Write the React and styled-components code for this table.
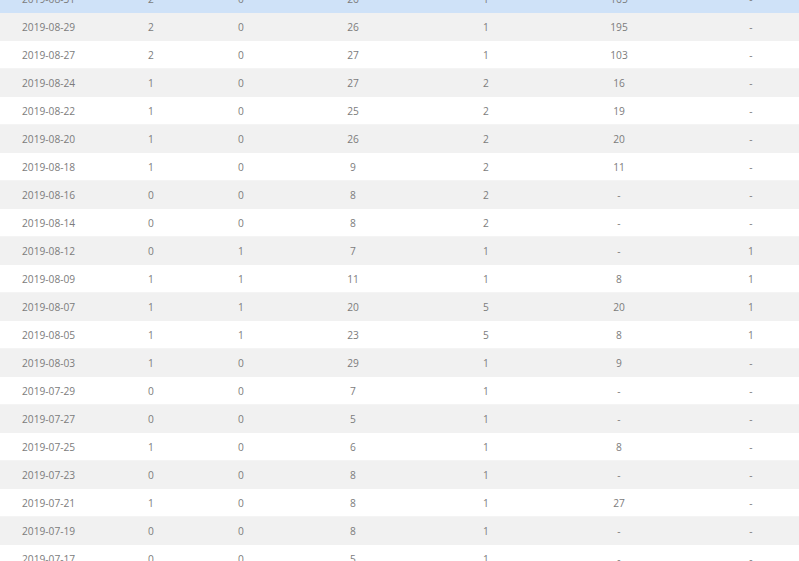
import React from "react";
import styled, { createGlobalStyle } from "styled-components";

const Global = createGlobalStyle`
  html, body {
    margin: 0;
    padding: 0;
    overflow: hidden;
    background: #fff;
  }
  body {
    font-family: "Open Sans", "Noto Sans", sans-serif;
  }
`;

const Table = styled.div`
  display: flex;
  flex-direction: column;
  width: 816px;
  margin-top: -15px;
`;

const Row = styled.div`
  display: grid;
  grid-template-columns: 106px 90px 90px 134px 132px 134px 130px;
  height: 28px;
  align-items: center;
  background: ${({ $selected, $stripe }) =>
    $selected ? "#cfe2f8" : $stripe ? "#f1f1f1" : "#fff"};
  border-bottom: ${({ $stripe, $selected }) => ($stripe || $selected ? "none" : "1px solid #f4f4f4")};
  box-sizing: border-box;
`;

const Cell = styled.div`
  font-size: 10.2px;
  color: #7c7c7c;
  text-align: center;
  white-space: nowrap;
`;

const DateCell = styled(Cell)`
  text-align: left;
  padding-left: 22px;
`;

const rows = [
  ["2019-08-31", "2", "0", "26", "1", "165", "-"],
  ["2019-08-29", "2", "0", "26", "1", "195", "-"],
  ["2019-08-27", "2", "0", "27", "1", "103", "-"],
  ["2019-08-24", "1", "0", "27", "2", "16", "-"],
  ["2019-08-22", "1", "0", "25", "2", "19", "-"],
  ["2019-08-20", "1", "0", "26", "2", "20", "-"],
  ["2019-08-18", "1", "0", "9", "2", "11", "-"],
  ["2019-08-16", "0", "0", "8", "2", "-", "-"],
  ["2019-08-14", "0", "0", "8", "2", "-", "-"],
  ["2019-08-12", "0", "1", "7", "1", "-", "1"],
  ["2019-08-09", "1", "1", "11", "1", "8", "1"],
  ["2019-08-07", "1", "1", "20", "5", "20", "1"],
  ["2019-08-05", "1", "1", "23", "5", "8", "1"],
  ["2019-08-03", "1", "0", "29", "1", "9", "-"],
  ["2019-07-29", "0", "0", "7", "1", "-", "-"],
  ["2019-07-27", "0", "0", "5", "1", "-", "-"],
  ["2019-07-25", "1", "0", "6", "1", "8", "-"],
  ["2019-07-23", "0", "0", "8", "1", "-", "-"],
  ["2019-07-21", "1", "0", "8", "1", "27", "-"],
  ["2019-07-19", "0", "0", "8", "1", "-", "-"],
  ["2019-07-17", "0", "0", "5", "1", "-", "-"],
];

export default function App() {
  return (
    <>
      <Global />
      <Table>
        {rows.map((r, i) => (
          <Row key={r[0]} $selected={i === 0} $stripe={i % 2 === 1}>
            <DateCell>{r[0]}</DateCell>
            {r.slice(1).map((v, j) => (
              <Cell key={j}>{v}</Cell>
            ))}
          </Row>
        ))}
      </Table>
    </>
  );
}
